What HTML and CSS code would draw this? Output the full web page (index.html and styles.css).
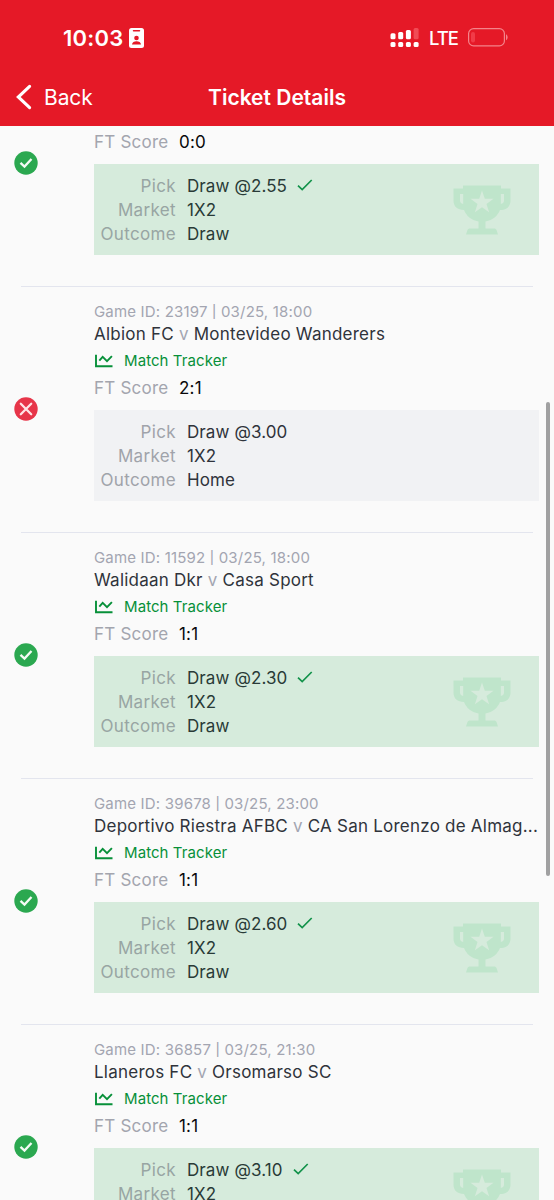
FILE: index.html
```
<!DOCTYPE html>
<html lang="en">
<head>
<meta charset="utf-8">
<title>Ticket Details</title>
<link rel="stylesheet" href="styles.css">
</head>
<body>
<svg class="defs" aria-hidden="true">
  <symbol id="won" viewBox="0 0 24 24"><circle cx="12" cy="12" r="11.7" fill="#2ba850"/><path d="M6.500 11.800l4 3.800 7-7.600" fill="none" stroke="#f4fbf5" stroke-width="2.300"/></symbol>
  <symbol id="lost" viewBox="0 0 24 24"><circle cx="12" cy="12" r="11.7" fill="#e73549"/><path d="M6.800 6.800l10.400 10.400M17.200 6.800L6.800 17.200" fill="none" stroke="#ffe4e6" stroke-width="2.300" stroke-linecap="round"/></symbol>
  <symbol id="chart" viewBox="0 0 18 14"><path d="M1 .8v11.400h16.500M4.300 6.700l3.400-3.900 4.300 4.300 4.900-5" fill="none" stroke="#079039" stroke-width="1.900"/></symbol>
  <symbol id="tick" viewBox="0 0 16 12"><path d="M1 6.600l4.200 4L14.700 1" fill="none" stroke="#12924a" stroke-width="1.700"/></symbol>
  <symbol id="cup" viewBox="0 0 58 50"><path fill="#bfe5cb" fill-rule="evenodd" d="M10 .5h38v3h9.500v12c0 6-4 9.500-10.500 9.500-2.500 6-7 10-14.500 11.500v7h8c2 0 2.700.500 3.200 2l1.300 4H13l1.300-4c.5-1.500 1.200-2 3.200-2h8v-7C18 35 13.500 31 11 25 4.500 25 .5 21.500.5 15.500v-12H10zM7 9v6.500c0 2 1 3 3.200 3.500V9zM51 9h-3.200v10c2.200-.5 3.200-1.500 3.200-3.500z"/><path fill="#d6ebdc" d="M29 5.500l2.800 8.200 8.700.1-7 5.200 2.600 8.300-7.100-5-7.100 5 2.600-8.300-7-5.200 8.700-.1z"/></symbol>
</svg>
<header class="header">
  <div class="status-bar">
    <span class="clock">10:03</span>
    <svg class="badge-icon" viewBox="0 0 15 20"><rect width="15" height="20" rx="2.500" fill="#fff"/><path d="M4.500 2.700h6" stroke="#e51927" stroke-width="1.500" stroke-linecap="round"/><circle cx="7.500" cy="10" r="2.300" fill="#e51927"/><path d="M3 16.600c0-4.600 9-4.600 9 0z" fill="#e51927"/></svg>
    <svg class="signal" viewBox="0 0 29 20"><g fill="#fff"><rect x=".5" y="5.300" width="5" height="6" rx="1.500"/><rect x="8.200" y="4" width="5" height="7.300" rx="1.500"/><rect x="15.900" y="2" width="5" height="9.300" rx="1.500"/><rect x=".5" y="14" width="5" height="5" rx="1.500"/><rect x="8.200" y="14" width="5" height="5" rx="1.500"/><rect x="15.900" y="14" width="5" height="5" rx="1.500"/><rect x="23.600" y="14" width="5" height="5" rx="1.500"/></g><rect x="23.600" y="0" width="5" height="11.300" rx="1.500" fill="#f14b55"/></svg>
    <span class="network">LTE</span>
    <svg class="battery" viewBox="0 0 40 19"><rect x=".6" y=".6" width="35.800" height="17.300" rx="5" fill="none" stroke="#f4838a" stroke-width="1.200"/><path d="M38 6.300c2.100.8 2.100 5.200 0 6z" fill="#f4838a"/><rect x="3" y="4" width="4" height="10.500" rx="2" fill="#f13b48"/></svg>
  </div>
  <nav class="nav">
    <a class="back"><svg class="chevron" viewBox="0 0 16 26"><path d="M13.600 2.300L2.300 13l11.300 10.700" fill="none" stroke="#fff" stroke-width="3.100" stroke-linecap="round"/></svg><span>Back</span></a>
    <h1 class="title">Ticket Details</h1>
  </nav>
</header>
<main class="list">
  <article class="entry entry-cut">
    <svg class="result"><use href="#won"/></svg>
    <div class="details">
      <p class="score"><span>FT Score</span><b>0:0</b></p>
      <dl class="bet bet-won"><dt>Pick</dt><dd>Draw @2.55<svg class="tick"><use href="#tick"/></svg></dd><dt>Market</dt><dd>1X2</dd><dt>Outcome</dt><dd>Draw</dd><svg class="cup"><use href="#cup"/></svg></dl>
    </div>
  </article>
  <article class="entry">
    <svg class="result"><use href="#lost"/></svg>
    <div class="details">
      <p class="meta">Game ID: 23197 <span class="bar">|</span> 03/25, 18:00</p>
      <h2 class="teams">Albion FC <i>v</i> Montevideo Wanderers</h2>
      <p class="tracker"><svg class="chart"><use href="#chart"/></svg>Match Tracker</p>
      <p class="score"><span>FT Score</span><b>2:1</b></p>
      <dl class="bet"><dt>Pick</dt><dd>Draw @3.00</dd><dt>Market</dt><dd>1X2</dd><dt>Outcome</dt><dd>Home</dd></dl>
    </div>
  </article>
  <article class="entry">
    <svg class="result"><use href="#won"/></svg>
    <div class="details">
      <p class="meta">Game ID: 11592 <span class="bar">|</span> 03/25, 18:00</p>
      <h2 class="teams">Walidaan Dkr <i>v</i> Casa Sport</h2>
      <p class="tracker"><svg class="chart"><use href="#chart"/></svg>Match Tracker</p>
      <p class="score"><span>FT Score</span><b>1:1</b></p>
      <dl class="bet bet-won"><dt>Pick</dt><dd>Draw @2.30<svg class="tick"><use href="#tick"/></svg></dd><dt>Market</dt><dd>1X2</dd><dt>Outcome</dt><dd>Draw</dd><svg class="cup"><use href="#cup"/></svg></dl>
    </div>
  </article>
  <article class="entry">
    <svg class="result"><use href="#won"/></svg>
    <div class="details">
      <p class="meta">Game ID: 39678 <span class="bar">|</span> 03/25, 23:00</p>
      <h2 class="teams">Deportivo Riestra AFBC <i>v</i> CA San Lorenzo de Almag...</h2>
      <p class="tracker"><svg class="chart"><use href="#chart"/></svg>Match Tracker</p>
      <p class="score"><span>FT Score</span><b>1:1</b></p>
      <dl class="bet bet-won"><dt>Pick</dt><dd>Draw @2.60<svg class="tick"><use href="#tick"/></svg></dd><dt>Market</dt><dd>1X2</dd><dt>Outcome</dt><dd>Draw</dd><svg class="cup"><use href="#cup"/></svg></dl>
    </div>
  </article>
  <article class="entry">
    <svg class="result"><use href="#won"/></svg>
    <div class="details">
      <p class="meta">Game ID: 36857 <span class="bar">|</span> 03/25, 21:30</p>
      <h2 class="teams">Llaneros FC <i>v</i> Orsomarso SC</h2>
      <p class="tracker"><svg class="chart"><use href="#chart"/></svg>Match Tracker</p>
      <p class="score"><span>FT Score</span><b>1:1</b></p>
      <dl class="bet bet-won"><dt>Pick</dt><dd>Draw @3.10<svg class="tick"><use href="#tick"/></svg></dd><dt>Market</dt><dd>1X2</dd><svg class="cup"><use href="#cup"/></svg></dl>
    </div>
  </article>
  <div class="scrollbar"></div>
</main>
</body>
</html>
```
FILE: styles.css
```
* { box-sizing: border-box; margin: 0; padding: 0; }
body {
  height: 1200px;
  overflow: hidden;
  display: flex;
  flex-direction: column;
  background: #fafafa;
  color: #2f333b;
  font-family: Inter, "Liberation Sans", sans-serif;
}
svg { display: block; flex: none; }
.defs { position: absolute; width: 0; height: 0; }

.header { height: 126px; flex: none; background: #e51927; color: #fff; }
.status-bar { height: 70px; padding: 6px 46px 0 63px; display: flex; align-items: center; }
.clock { font-size: 22px; font-weight: 600; width: 66px; letter-spacing: 0.2px; white-space: nowrap; }
.badge-icon { width: 15px; height: 20px; }
.signal { width: 29px; height: 20px; margin-left: auto; }
.network { font-size: 18.5px; font-weight: 500; width: 39px; margin-left: 10px; letter-spacing: -1px; }
.battery { width: 40px; height: 19px; margin-bottom: 1px; }
.nav { height: 54px; display: grid; grid-template-columns: 191px 172px 191px; align-items: center; }
.back { display: flex; align-items: center; gap: 12px; padding-left: 16px; font-size: 21px; letter-spacing: -0.1px; }
.chevron { width: 16px; height: 26px; }
.title { font-size: 21px; font-weight: 600; text-align: center; white-space: nowrap; }

.list { position: relative; flex: 1; min-height: 0; overflow: hidden; }
.entry { height: 246px; display: grid; grid-template-columns: 94px 445px; position: relative; }
.entry + .entry::before { content: ""; position: absolute; left: 21px; top: 0; width: 512px; height: 1px; background: #e3e5ee; }
.result { width: 24px; height: 24px; margin: 111px 0 0 14px; }
.details { padding-top: 14.7px; }
.entry-cut { height: 160.4px; }
.entry-cut .result { margin-top: 25px; }
.entry-cut .details { padding-top: 3px; }

.meta { height: 21px; line-height: 21px; font-size: 15px; letter-spacing: 0.18px; color: #a3a5b1; white-space: nowrap; }
.bar { font-size: 12.5px; font-weight: 500; position: relative; top: -1px; }
.teams { height: 24px; line-height: 24px; font-size: 17px; font-weight: 400; letter-spacing: 0.23px; white-space: nowrap; }
.teams i { font-style: normal; color: #a3a5b1; }
.tracker { height: 29px; display: flex; align-items: center; font-size: 15px; letter-spacing: 0.08px; color: #079039; }
.chart { width: 18px; height: 14px; margin: 0 11px 0 1px; }
.score { height: 26px; line-height: 26px; display: flex; font-size: 17px; color: #a3a5ae; }
.score span { width: 85px; letter-spacing: 0.22px; }
.score b { font-weight: 400; letter-spacing: 0.2px; color: #08080a; }
.bet {
  position: relative;
  height: 91px;
  margin-top: 9.2px;
  padding: 10px 6px 9px;
  display: grid;
  grid-template-columns: 76px 1fr;
  grid-auto-rows: 24px;
  column-gap: 11px;
  line-height: 24px;
  font-size: 17px;
  background: #f1f2f4;
}
.bet dt { text-align: right; letter-spacing: 0.35px; color: #a0a3aa; }
.bet dd { display: flex; letter-spacing: 0.1px; }
.bet-won { background: #d6ebdc; }
.bet-won dt { color: #98a5a3; }
.bet-won dd { color: #293a37; }
.tick { width: 16px; height: 12px; margin: 4.5px 0 0 10px; }
.cup { position: absolute; right: 28px; top: 21px; width: 58px; height: 50px; }
.scrollbar { position: absolute; left: 546px; top: 275.5px; width: 4px; height: 474px; border-radius: 2px; background: #a0a0a1; }
```
